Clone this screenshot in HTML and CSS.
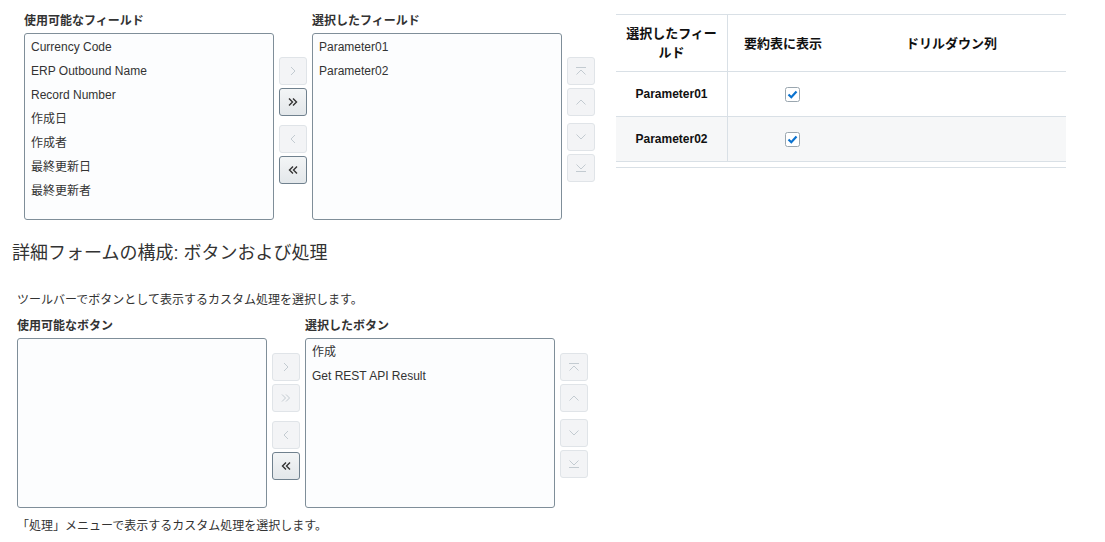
FILE: index.html
```html
<!DOCTYPE html>
<html lang="ja">
<head>
  <meta charset="UTF-8" />
  <title>詳細フォームの構成</title>
  <link rel="stylesheet" href="styles.css">
</head>
<body>
  <div class="fields">
    <div class="shuttle">
      <div class="pane">
        <div class="pane-label">使用可能なフィールド</div>
        <div class="listbox">
          <div class="listbox-item">Currency Code</div>
          <div class="listbox-item">ERP Outbound Name</div>
          <div class="listbox-item">Record Number</div>
          <div class="listbox-item">作成日</div>
          <div class="listbox-item">作成者</div>
          <div class="listbox-item">最終更新日</div>
          <div class="listbox-item">最終更新者</div>
        </div>
      </div>
      <div class="btn-col">
        <div class="btn-group">
          <div class="sbtn disabled"><svg width="10" height="10" viewBox="0 0 10 10"><polyline points="3,1 7,5 3,9" /></svg></div>
          <div class="sbtn"><svg width="12" height="10" viewBox="0 0 12 10"><polyline points="2,1.5 5.5,5 2,8.5" /><polyline points="6,1.5 9.5,5 6,8.5" /></svg></div>
        </div>
        <div class="btn-group">
          <div class="sbtn disabled"><svg width="10" height="10" viewBox="0 0 10 10"><polyline points="7,1 3,5 7,9" /></svg></div>
          <div class="sbtn"><svg width="12" height="10" viewBox="0 0 12 10"><polyline points="6,1.5 2.5,5 6,8.5" /><polyline points="10,1.5 6.5,5 10,8.5" /></svg></div>
        </div>
      </div>
      <div class="pane">
        <div class="pane-label">選択したフィールド</div>
        <div class="listbox">
          <div class="listbox-item">Parameter01</div>
          <div class="listbox-item">Parameter02</div>
        </div>
      </div>
      <div class="btn-col reorder">
        <div class="btn-group">
          <div class="sbtn disabled"><svg width="12" height="10" viewBox="0 0 12 10"><line x1="1" y1="1.5" x2="11" y2="1.5" /><polyline points="1.5,8.5 6,4 10.5,8.5" /></svg></div>
          <div class="sbtn disabled"><svg width="12" height="10" viewBox="0 0 12 10"><polyline points="1.5,7.5 6,3 10.5,7.5" /></svg></div>
        </div>
        <div class="btn-group">
          <div class="sbtn disabled"><svg width="12" height="10" viewBox="0 0 12 10"><polyline points="1.5,2.5 6,7 10.5,2.5" /></svg></div>
          <div class="sbtn disabled"><svg width="12" height="10" viewBox="0 0 12 10"><polyline points="1.5,1.5 6,6 10.5,1.5" /><line x1="1" y1="8.5" x2="11" y2="8.5" /></svg></div>
        </div>
      </div>
    </div>

    <div class="summary">
      <table class="summary-table">
        <tr>
          <th class="col-field">選択したフィールド</th>
          <th class="col-show">要約表に表示</th>
          <th class="col-drill">ドリルダウン列</th>
        </tr>
        <tr>
          <td class="col-field">Parameter01</td>
          <td class="col-show"><span class="check"><svg width="15" height="15" viewBox="0 0 15 15"><rect x="0.5" y="0.5" width="14" height="14" rx="2" /><polyline points="3.5,7.5 6.3,10.2 11.5,4.5" /></svg></span></td>
          <td></td>
        </tr>
        <tr class="striped">
          <td class="col-field">Parameter02</td>
          <td class="col-show"><span class="check"><svg width="15" height="15" viewBox="0 0 15 15"><rect x="0.5" y="0.5" width="14" height="14" rx="2" /><polyline points="3.5,7.5 6.3,10.2 11.5,4.5" /></svg></span></td>
          <td></td>
        </tr>
      </table>
    </div>
  </div>

  <div class="buttons-section">
    <h2 class="section-title">詳細フォームの構成: ボタンおよび処理</h2>
    <p class="hint">ツールバーでボタンとして表示するカスタム処理を選択します。</p>
    <div class="shuttle small">
      <div class="pane">
        <div class="pane-label">使用可能なボタン</div>
        <div class="listbox"></div>
      </div>
      <div class="btn-col">
        <div class="btn-group">
          <div class="sbtn disabled"><svg width="10" height="10" viewBox="0 0 10 10"><polyline points="3,1 7,5 3,9" /></svg></div>
          <div class="sbtn disabled"><svg width="12" height="10" viewBox="0 0 12 10"><polyline points="2,1.5 5.5,5 2,8.5" /><polyline points="6,1.5 9.5,5 6,8.5" /></svg></div>
        </div>
        <div class="btn-group">
          <div class="sbtn disabled"><svg width="10" height="10" viewBox="0 0 10 10"><polyline points="7,1 3,5 7,9" /></svg></div>
          <div class="sbtn"><svg width="12" height="10" viewBox="0 0 12 10"><polyline points="6,1.5 2.5,5 6,8.5" /><polyline points="10,1.5 6.5,5 10,8.5" /></svg></div>
        </div>
      </div>
      <div class="pane">
        <div class="pane-label">選択したボタン</div>
        <div class="listbox">
          <div class="listbox-item">作成</div>
          <div class="listbox-item">Get REST API Result</div>
        </div>
      </div>
      <div class="btn-col reorder">
        <div class="btn-group">
          <div class="sbtn disabled"><svg width="12" height="10" viewBox="0 0 12 10"><line x1="1" y1="1.5" x2="11" y2="1.5" /><polyline points="1.5,8.5 6,4 10.5,8.5" /></svg></div>
          <div class="sbtn disabled"><svg width="12" height="10" viewBox="0 0 12 10"><polyline points="1.5,7.5 6,3 10.5,7.5" /></svg></div>
        </div>
        <div class="btn-group">
          <div class="sbtn disabled"><svg width="12" height="10" viewBox="0 0 12 10"><polyline points="1.5,2.5 6,7 10.5,2.5" /></svg></div>
          <div class="sbtn disabled"><svg width="12" height="10" viewBox="0 0 12 10"><polyline points="1.5,1.5 6,6 10.5,1.5" /><line x1="1" y1="8.5" x2="11" y2="8.5" /></svg></div>
        </div>
      </div>
    </div>
    <p class="hint bottom">「処理」メニューで表示するカスタム処理を選択します。</p>
  </div>
</body>
</html>
```

FILE: styles.css
```css
body {
  font-family: "Liberation Sans", Arial, "Noto Sans CJK JP", sans-serif;
  font-size: 12px;
  color: #333;
  margin: 0;
  background: #fff;
}
.fields {
  display: flex;
  align-items: flex-start;
  padding: 13px 0 0 24px;
}
.shuttle {
  display: flex;
  align-items: flex-start;
}
.pane-label {
  font-weight: bold;
  line-height: 16px;
  margin-bottom: 4px;
}
.listbox {
  width: 250px;
  height: 187px;
  box-sizing: border-box;
  border: 1px solid #7f8e99;
  border-radius: 3px;
  background: #fcfdfe;
  padding: 1px 6px;
}
.small .listbox {
  height: 170px;
}
.listbox-item {
  line-height: 24px;
  white-space: nowrap;
}
.btn-col {
  display: flex;
  flex-direction: column;
  gap: 9px;
  margin: 44px 5px 0;
}
.small .btn-col {
  margin-top: 35px;
}
.btn-col.reorder {
  gap: 7px;
}
.btn-group {
  display: flex;
  flex-direction: column;
  gap: 3px;
}
.sbtn {
  width: 28px;
  height: 28px;
  box-sizing: border-box;
  border: 1px solid #70818e;
  border-radius: 3px;
  background: linear-gradient(#f3f5f6, #e3e7ea);
  display: flex;
  align-items: center;
  justify-content: center;
}
.sbtn svg {
  fill: none;
  stroke: #333;
  stroke-width: 1.4;
}
.sbtn.disabled {
  border-color: #e0e4e8;
  background: #f3f4f6;
}
.sbtn.disabled svg {
  stroke: #c3cbd1;
  stroke-width: 1;
}
.summary {
  margin: 1px 0 0 16px;
  width: 450px;
  border-bottom: 1px solid #d9e0e6;
  padding-bottom: 5px;
}
.summary-table {
  width: 100%;
  border-collapse: collapse;
  border-top: 1px solid #d9e0e6;
  color: #111;
}
.summary-table th {
  font-size: 13px;
  font-weight: bold;
  height: 56px;
  line-height: 19px;
  padding: 0 8px;
  text-align: center;
  border-bottom: 1px solid #d9e0e6;
}
.summary-table td {
  height: 44px;
  padding: 0;
  text-align: center;
  font-weight: bold;
  border-bottom: 1px solid #d9e0e6;
}
.summary-table .col-field {
  width: 95px;
  border-right: 1px solid #d9e0e6;
}
.summary-table th.col-show {
  width: 102px;
  padding: 0 23px 0 4px;
}
.summary-table th.col-drill {
  padding-right: 28px;
}
.striped td {
  background: #f6f7f8;
}
.check {
  display: inline-block;
  vertical-align: middle;
  height: 15px;
}
.check rect {
  fill: #fff;
  stroke: #9aa6af;
}
.check polyline {
  fill: none;
  stroke: #0a72cf;
  stroke-width: 2.2;
}
.buttons-section {
  padding-left: 17px;
}
.section-title {
  font-size: 18px;
  font-weight: normal;
  line-height: 24px;
  margin: 21px 0 0 -5px;
}
.hint {
  line-height: 16px;
  margin: 27px 0 10px;
}
.hint.bottom {
  margin: 10px 0 0;
}
```
